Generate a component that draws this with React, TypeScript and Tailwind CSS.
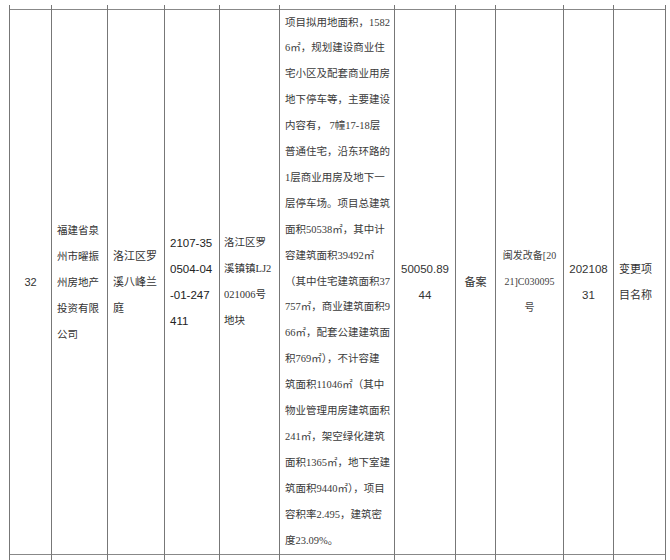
const sans = "font-['Liberation_Sans','Noto_Sans_CJK_SC',sans-serif]";
const serif = "font-['Liberation_Serif','Noto_Sans_CJK_SC',serif]";

const widths = [42, 56, 57, 55, 60, 115, 61, 40, 68, 50, 52];

const detail = [
  "项目拟用地面积，1582",
  "6㎡，规划建设商业住",
  "宅小区及配套商业用房",
  "地下停车等，主要建设",
  "内容有， 7幢17-18层",
  "普通住宅，沿东环路的",
  "1层商业用房及地下一",
  "层停车场。项目总建筑",
  "面积50538㎡，其中计",
  "容建筑面积39492㎡",
  "（其中住宅建筑面积37",
  "757㎡，商业建筑面积9",
  "66㎡，配套公建建筑面",
  "积769㎡），不计容建",
  "筑面积11046㎡（其中",
  "物业管理用房建筑面积",
  "241㎡，架空绿化建筑",
  "面积1365㎡，地下室建",
  "筑面积9440㎡），项目",
  "容积率2.495，建筑密",
  "度23.09%。",
];

function Lines({ lines, className }: { lines: string[]; className?: string }) {
  return (
    <div className={className}>
      {lines.map((l, i) => (
        <div key={i} className="whitespace-nowrap">
          {l}
        </div>
      ))}
    </div>
  );
}

export default function App() {
  const cell = "border-x border-[#777] p-0";
  return (
    <div className="w-[670px] h-[560px] bg-white overflow-hidden text-[#333] pt-[5px]">
      <table className="ml-[9px] border-collapse table-fixed w-[657px]">
        <colgroup>
          {widths.map((w, i) => (
            <col key={i} style={{ width: w }} />
          ))}
        </colgroup>
        <tbody>
          <tr className="h-[4px]">
            {widths.map((_, i) => (
              <td key={i} className={cell} />
            ))}
          </tr>
          <tr className="border-y border-[#888] align-middle text-[11px] leading-[26px]">
            <td className={`${cell} ${sans} text-center`}>32</td>
            <td className={`${cell} ${sans} pl-[5px] text-[10.5px]`}>
              <Lines lines={["福建省泉", "州市曜振", "州房地产", "投资有限", "公司"]} />
            </td>
            <td className={`${cell} ${sans} pl-[5px]`}>
              <Lines lines={["洛江区罗", "溪八峰兰", "庭"]} />
            </td>
            <td className={`${cell} ${sans} pl-[5px] text-[11.5px] text-[#222]`}>
              <Lines lines={["2107-35", "0504-04", "-01-247", "411"]} />
            </td>
            <td className={`${cell} pl-[4px] ${serif} text-[10.5px]`}>
              <Lines lines={["洛江区罗", "溪镇镇LJ2", "021006号", "地块"]} />
            </td>
            <td className={`${cell} pl-[5px] ${serif} text-[10.5px] leading-[25.9px] text-[#3a3a3a]`}>
              <Lines lines={detail} />
            </td>
            <td className={`${cell} ${sans} text-center text-[11.5px]`}>
              <Lines lines={["50050.89", "44"]} />
            </td>
            <td className={`${cell} ${sans} text-center`}>备案</td>
            <td className={`${cell} ${serif} text-center text-[10px] text-[#444]`}>
              <Lines lines={["闽发改备[20", "21]C030095", "号"]} />
            </td>
            <td className={`${cell} ${sans} text-center text-[11.5px]`}>
              <Lines lines={["202108", "31"]} />
            </td>
            <td className={`${cell} ${sans} pl-[5px]`}>
              <Lines lines={["变更项", "目名称"]} />
            </td>
          </tr>
          <tr className="h-[10px]">
            {widths.map((_, i) => (
              <td key={i} className={cell} />
            ))}
          </tr>
        </tbody>
      </table>
    </div>
  );
}
